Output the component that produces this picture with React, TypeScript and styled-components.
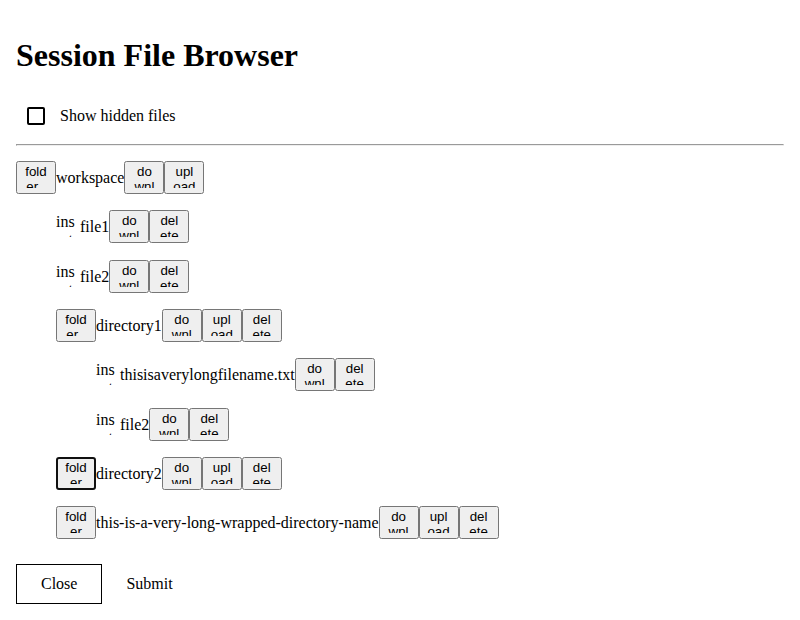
import React, { useState } from "react";
import styled, { createGlobalStyle } from "styled-components";

const GlobalStyle = createGlobalStyle`
  body {
    margin: 0;
    background: #fff;
    color: #000;
    font-family: "Liberation Serif", "Times New Roman", serif;
    font-size: 16px;
  }
`;

const Page = styled.main`
  padding: 16px;
`;

const Title = styled.h1`
  margin: 21px 0 22px;
  font-size: 32px;
  line-height: 37px;
  font-weight: bold;
`;

const Option = styled.label`
  display: flex;
  align-items: center;
  gap: 15px;
  height: 40px;
  padding-left: 11px;
`;

const Checkbox = styled.input`
  appearance: none;
  width: 18px;
  height: 18px;
  margin: 0;
  border: 2px solid #000;
  border-radius: 2px;
  background: #fff;

  &:checked {
    background: #000;
    box-shadow: inset 0 0 0 2px #fff;
  }
`;

const Divider = styled.hr`
  margin: 8px 0 15px;
`;

const Tree = styled.ul<{ $nested?: boolean }>`
  margin: 0;
  padding: 0 0 0 ${(p) => (p.$nested ? "40px" : "0")};
  list-style: none;
`;

const Item = styled.li`
  display: flex;
  flex-direction: column;
  gap: 16px;

  & + & {
    margin-top: 16px;
  }

  &[data-kind="file"] + &[data-kind="file"] {
    margin-top: 17px;
  }
`;

const Row = styled.div`
  display: flex;
  align-items: center;
`;

const Glyph = styled.span`
  display: inline-block;
  width: 24px;
  height: 24px;
  overflow: hidden;
  word-break: break-all;
`;

const IconButton = styled.button`
  flex: none;
  margin: 0;
  padding: 1px 6px;
  font-family: "Liberation Sans", Arial, sans-serif;
`;

const FileIcon = styled.div`
  flex: none;
`;

const Actions = styled.div`
  display: flex;
`;

const Footer = styled.footer`
  display: flex;
  margin-top: 25px;
`;

const TextButton = styled.button<{ $outlined?: boolean }>`
  height: 40px;
  padding: 0 24px;
  border: ${(p) => (p.$outlined ? "1px solid #000" : "none")};
  background: #fff;
  color: #000;
  font-family: inherit;
  font-size: 16px;
`;

type Entry = {
  name: string;
  kind: "file" | "directory";
  open?: boolean;
  focused?: boolean;
  root?: boolean;
  children?: Entry[];
};

const root: Entry = {
  name: "workspace",
  kind: "directory",
  open: true,
  root: true,
  children: [
    { name: "file1", kind: "file" },
    { name: "file2", kind: "file" },
    {
      name: "directory1",
      kind: "directory",
      open: true,
      children: [
        { name: "thisisaverylongfilename.txt", kind: "file" },
        { name: "file2", kind: "file" },
      ],
    },
    { name: "directory2", kind: "directory", focused: true },
    { name: "this-is-a-very-long-wrapped-directory-name", kind: "directory" },
  ],
};

function TreeEntry({ entry }: { entry: Entry }) {
  const [open, setOpen] = useState(Boolean(entry.open));
  const isDirectory = entry.kind === "directory";
  const actions = ["download"];
  if (isDirectory) actions.push("upload");
  if (!entry.root) actions.push("delete");

  return (
    <Item data-kind={entry.kind}>
      <Row>
        {isDirectory ? (
          <IconButton
            type="button"
            autoFocus={entry.focused}
            aria-expanded={open}
            aria-label={`Toggle ${entry.name}`}
            onClick={() => setOpen(!open)}
          >
            <Glyph>{open ? "folder_open" : "folder"}</Glyph>
          </IconButton>
        ) : (
          <FileIcon aria-hidden="true">
            <Glyph>insert_drive_file</Glyph>
          </FileIcon>
        )}
        <span>{entry.name}</span>
        <Actions>
          {actions.map((action) => (
            <IconButton key={action} type="button" aria-label={`${action} ${entry.name}`}>
              <Glyph>{action}</Glyph>
            </IconButton>
          ))}
        </Actions>
      </Row>
      {open && entry.children && (
        <Tree $nested>
          {entry.children.map((child) => (
            <TreeEntry key={child.name} entry={child} />
          ))}
        </Tree>
      )}
    </Item>
  );
}

export default function App() {
  return (
    <>
      <GlobalStyle />
      <Page>
        <Title>Session File Browser</Title>
        <Option>
          <Checkbox type="checkbox" />
          Show hidden files
        </Option>
        <Divider />
        <Tree>
          <TreeEntry entry={root} />
        </Tree>
        <Footer>
          <TextButton type="button" $outlined>
            Close
          </TextButton>
          <TextButton type="submit">Submit</TextButton>
        </Footer>
      </Page>
    </>
  );
}
